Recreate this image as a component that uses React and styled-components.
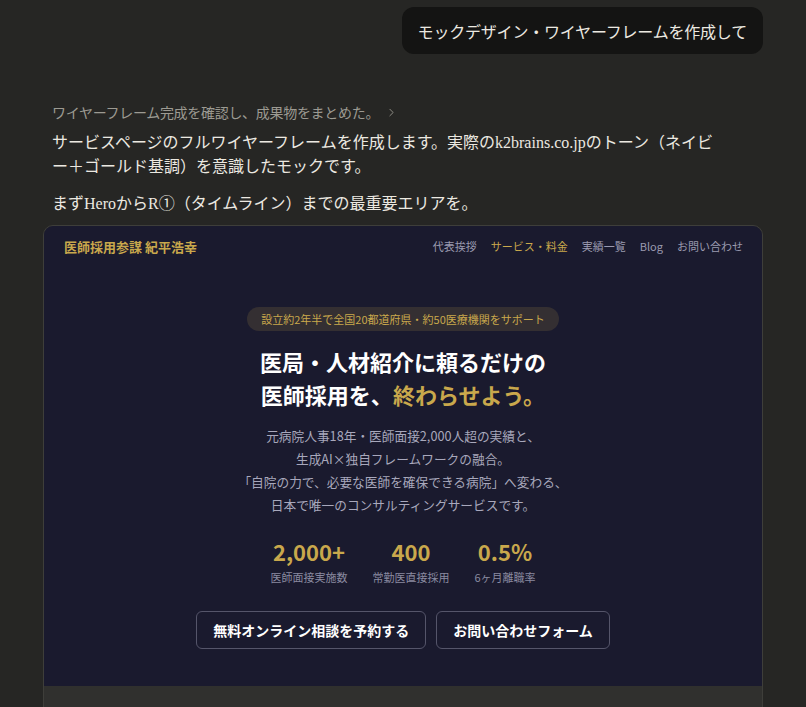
import React from "react";
import styled, { createGlobalStyle } from "styled-components";
import { ChevronRight } from "lucide-react";

const GlobalStyle = createGlobalStyle`
  html, body {
    margin: 0;
    padding: 0;
    background: #262624;
    overflow: hidden;
  }
  * {
    box-sizing: border-box;
  }
`;

const stats = [
  { value: "2,000+", label: "医師面接実施数" },
  { value: "400", label: "常勤医直接採用" },
  { value: "0.5%", label: "6ヶ月離職率" },
];

const navItems = [
  { label: "代表挨拶" },
  { label: "サービス・料金", active: true },
  { label: "実績一覧" },
  { label: "Blog" },
  { label: "お問い合わせ" },
];

const App = () => {
  return (
    <Page>
      <GlobalStyle />
      <UserRow>
        <UserBubble>モックデザイン・ワイヤーフレームを作成して</UserBubble>
      </UserRow>

      <Reply>
        <Status>
          ワイヤーフレーム完成を確認し、成果物をまとめた。
          <ChevronRight size={13} strokeWidth={1.6} />
        </Status>
        <Paragraph>
          サービスページのフルワイヤーフレームを作成します。実際のk2brains.co.jpのトーン（ネイビー＋ゴールド基調）を意識したモックです。
        </Paragraph>
        <Paragraph>まずHeroからR①（タイムライン）までの最重要エリアを。</Paragraph>
      </Reply>

      <Frame>
        <Hero>
          <Nav>
            <Logo>医師採用参謀 紀平浩幸</Logo>
            <NavLinks>
              {navItems.map((item) => (
                <NavLink key={item.label} $active={item.active}>
                  {item.label}
                </NavLink>
              ))}
            </NavLinks>
          </Nav>

          <HeroBody>
            <Badge>設立約2年半で全国20都道府県・約50医療機関をサポート</Badge>
            <Heading>
              医局・人材紹介に頼るだけの
              <br />
              医師採用を、<Gold>終わらせよう。</Gold>
            </Heading>
            <Lead>
              元病院人事18年・医師面接2,000人超の実績と、
              <br />
              生成AI×独自フレームワークの融合。
              <br />
              「自院の力で、必要な医師を確保できる病院」へ変わる、
              <br />
              日本で唯一のコンサルティングサービスです。
            </Lead>
            <Stats>
              {stats.map((s) => (
                <Stat key={s.label}>
                  <StatValue>{s.value}</StatValue>
                  <StatLabel>{s.label}</StatLabel>
                </Stat>
              ))}
            </Stats>
            <Buttons>
              <OutlineButton>無料オンライン相談を予約する</OutlineButton>
              <OutlineButton>お問い合わせフォーム</OutlineButton>
            </Buttons>
          </HeroBody>
        </Hero>
        <NextSection />
      </Frame>
    </Page>
  );
};

export default App;

const Page = styled.div`
  width: 806px;
  height: 707px;
  padding: 7px 43px 0 43px;
  font-family: "Noto Sans CJK JP", "Noto Sans", sans-serif;
`;

const UserRow = styled.div`
  display: flex;
  justify-content: flex-end;
`;

const UserBubble = styled.div`
  background: #141413;
  color: #ece9e1;
  font-size: 16px;
  letter-spacing: -0.2px;
  line-height: 24px;
  padding: 11.5px 16px;
  border-radius: 12px;
`;

const Reply = styled.div`
  padding: 48px 0 0 9px;
`;

const Status = styled.div`
  display: flex;
  align-items: center;
  gap: 6px;
  color: #9c9a92;
  font-size: 14px;
  letter-spacing: -0.3px;
  line-height: 20px;
  margin-bottom: 9px;
`;

const Paragraph = styled.p`
  margin: 0 0 13px;
  width: 676px;
  color: #ece9e1;
  font-family: "Liberation Serif", "Noto Sans CJK JP", serif;
  font-size: 16px;
  line-height: 24px;
  line-break: loose;
  &:last-child {
    margin-bottom: 9px;
  }
`;

const Frame = styled.div`
  width: 720px;
  height: 500px;
  border: 1px solid #3e3e3a;
  border-radius: 10px 10px 0 0;
  overflow: hidden;
  background: #30302e;
`;

const Hero = styled.section`
  background: #1a1a2e;
  padding-bottom: 37px;
`;

const Nav = styled.nav`
  height: 40px;
  display: flex;
  align-items: center;
  justify-content: space-between;
  padding: 0 19px 0 20px;
`;

const Logo = styled.div`
  color: #c9a84c;
  font-size: 13px;
  font-weight: 700;
`;

const NavLinks = styled.div`
  display: flex;
  gap: 14px;
`;

const NavLink = styled.span`
  font-size: 11px;
  color: ${(p) => (p.$active ? "#c9a84c" : "#9a9ab0")};
`;

const HeroBody = styled.div`
  display: flex;
  flex-direction: column;
  align-items: center;
  padding-top: 41px;
`;

const Badge = styled.div`
  background: rgba(201, 168, 76, 0.15);
  color: #c9a84c;
  font-size: 11px;
  line-height: 24px;
  padding: 0 14px;
  border-radius: 12px;
`;

const Heading = styled.h1`
  margin: 14px 0 0;
  color: #ffffff;
  font-size: 22px;
  font-weight: 700;
  line-height: 33px;
  text-align: center;
`;

const Gold = styled.span`
  color: #c9a84c;
`;

const Lead = styled.p`
  margin: 13px 0 0;
  color: #a8a8bc;
  font-size: 12.7px;
  line-height: 23px;
  text-align: center;
`;

const Stats = styled.div`
  display: flex;
  gap: 25px;
  margin-top: 22px;
`;

const Stat = styled.div`
  display: flex;
  flex-direction: column;
  align-items: center;
`;

const StatValue = styled.div`
  color: #c9a84c;
  font-size: 22px;
  font-weight: 700;
  line-height: 26px;
`;

const StatLabel = styled.div`
  margin-top: 5px;
  color: #8a8aa0;
  font-size: 11px;
  line-height: 16px;
`;

const Buttons = styled.div`
  display: flex;
  gap: 10px;
  margin-top: 26px;
`;

const OutlineButton = styled.button`
  height: 38px;
  padding: 0 16px;
  background: transparent;
  border: 1px solid #55556a;
  border-radius: 6px;
  color: #ffffff;
  font-family: "Noto Sans CJK JP", sans-serif;
  font-size: 14px;
  font-weight: 700;
`;

const NextSection = styled.div`
  height: 100px;
  background: #30302e;
`;
